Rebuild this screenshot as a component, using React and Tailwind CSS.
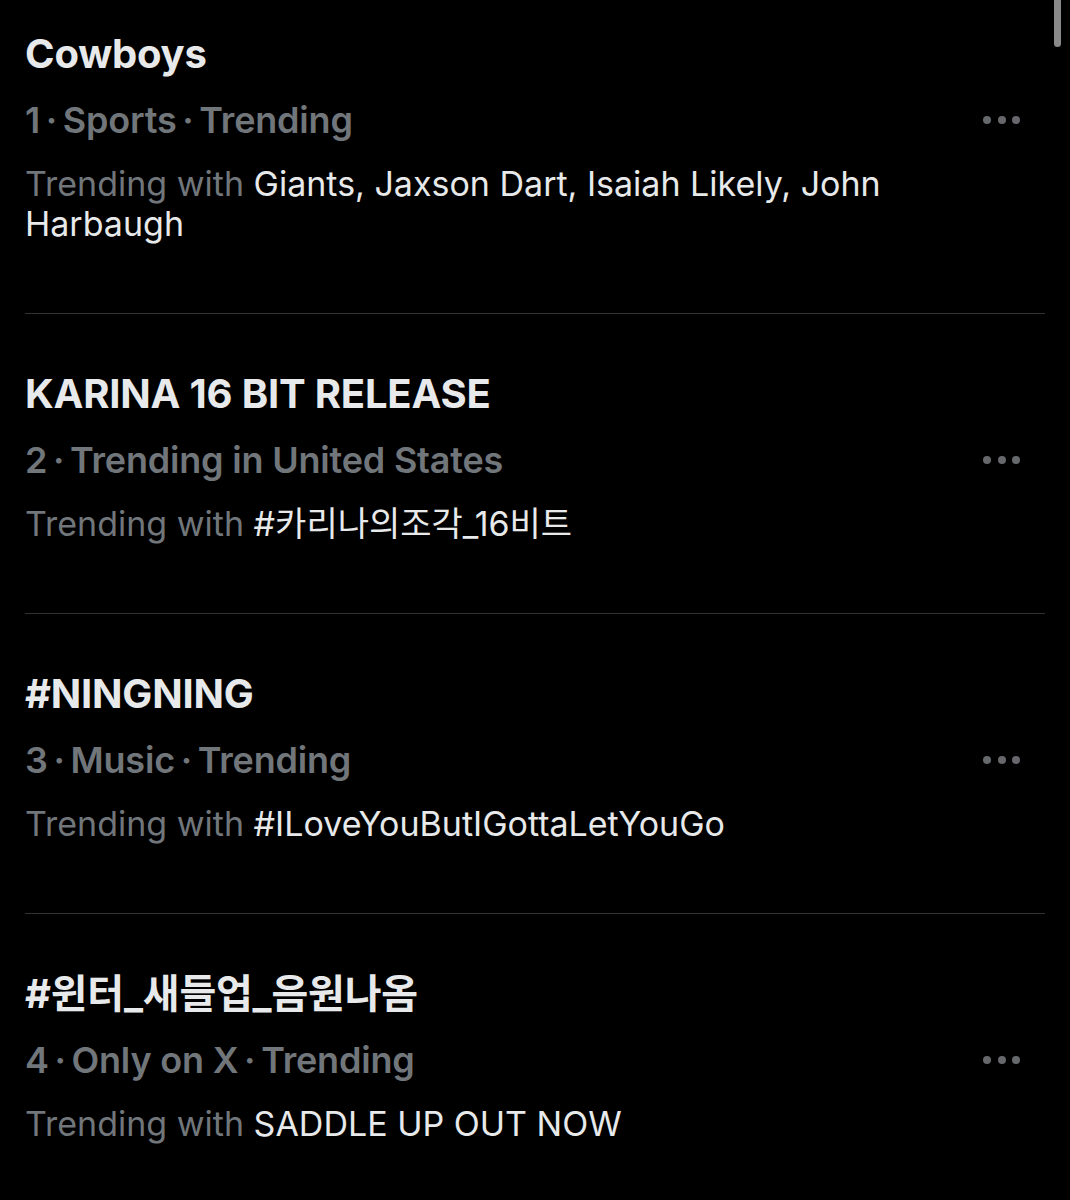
const trends = [
  {
    title: 'Cowboys',
    meta: ['1', 'Sports', 'Trending'],
    with: 'Giants, Jaxson Dart, Isaiah Likely, John Harbaugh',
  },
  {
    title: 'KARINA 16 BIT RELEASE',
    meta: ['2', 'Trending in United States'],
    with: '#카리나의조각_16비트',
  },
  {
    title: '#NINGNING',
    meta: ['3', 'Music', 'Trending'],
    with: '#ILoveYouButIGottaLetYouGo',
  },
  {
    title: '#윈터_새들업_음원나옴',
    meta: ['4', 'Only on X', 'Trending'],
    with: 'SADDLE UP OUT NOW',
  },
];

const MoreDots = () => (
  <div className="flex items-center gap-[6.5px] mr-[25px]">
    <span className="w-2 h-2 rounded-full bg-[#66686c]" />
    <span className="w-2 h-2 rounded-full bg-[#66686c]" />
    <span className="w-2 h-2 rounded-full bg-[#66686c]" />
  </div>
);

const TrendItem = ({ trend, first }) => (
  <div className={`border-b border-[#2f3336] pb-[69px] ${first ? 'pt-[30px]' : 'pt-[56px]'}`}>
    <div className="text-[40px] leading-[48px] font-bold text-[#e7e9ea] tracking-[-0.2px]">
      {trend.title}
    </div>
    <div className="mt-[20px] flex items-center justify-between">
      <div className="text-[36px] leading-[44px] font-semibold text-[#71767b] tracking-[-0.2px]">
        {trend.meta.join('\u2009·\u2009')}
      </div>
      <MoreDots />
    </div>
    <div className="mt-[22px] text-[34px] leading-[40px] text-[#71767b] pr-[100px]">
      Trending with <span className="text-[#e7e9ea]">{trend.with}</span>
    </div>
  </div>
);

export default function App() {
  return (
    <div
      className="relative w-[1070px] h-[1200px] overflow-hidden bg-black px-[25px]"
      style={{ fontFamily: 'Inter, "Noto Sans CJK KR", sans-serif' }}
    >
      <div className="absolute top-0 right-[9px] w-[7px] h-[47px] rounded-b-full bg-[#8a8a8a]" />
      {trends.map((t, i) => (
        <TrendItem key={t.title} trend={t} first={i === 0} />
      ))}
    </div>
  );
}
